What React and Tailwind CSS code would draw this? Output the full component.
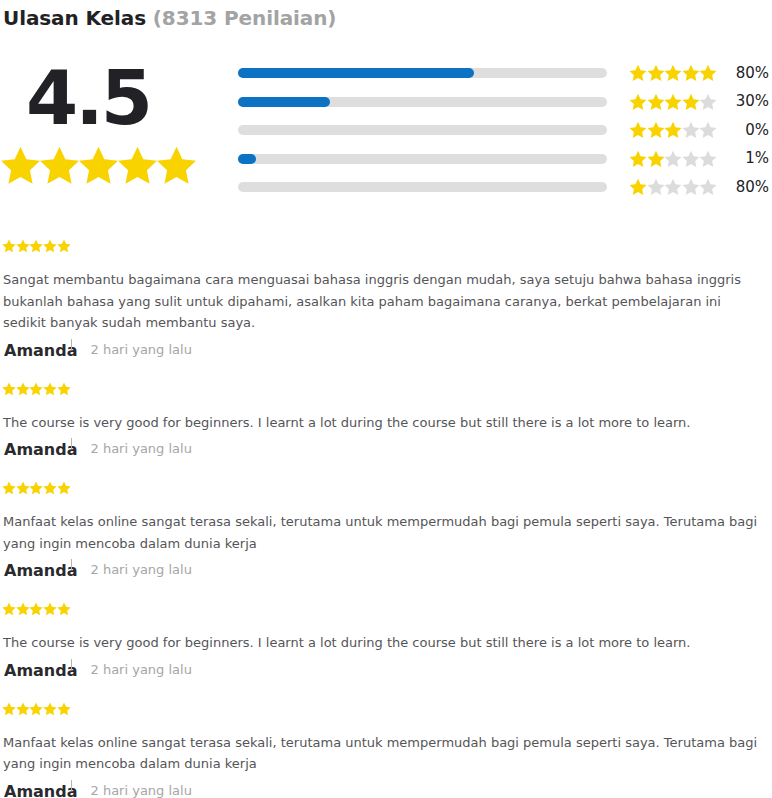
import React from "react";

const STAR_PATH =
  "M12 0.5L15.41 7.81 23.41 8.79 17.52 14.29 19.05 22.21 12 18.3 4.95 22.21 6.48 14.29 0.59 8.79 8.59 7.81z";

const BARS = [
  { stars: 5, fill: 64, label: "80%" },
  { stars: 4, fill: 25, label: "30%" },
  { stars: 3, fill: 0, label: "0%" },
  { stars: 2, fill: 5, label: "1%" },
  { stars: 1, fill: 0, label: "80%" },
];

const REVIEWS = [
  "Sangat membantu bagaimana cara menguasai bahasa inggris dengan mudah, saya setuju bahwa bahasa inggris bukanlah bahasa yang sulit untuk dipahami, asalkan kita paham bagaimana caranya, berkat pembelajaran ini sedikit banyak sudah membantu saya.",
  "The course is very good for beginners. I learnt a lot during the course but still there is a lot more to learn.",
  "Manfaat kelas online sangat terasa sekali, terutama untuk mempermudah bagi pemula seperti saya. Terutama bagi yang ingin mencoba dalam dunia kerja",
  "The course is very good for beginners. I learnt a lot during the course but still there is a lot more to learn.",
  "Manfaat kelas online sangat terasa sekali, terutama untuk mempermudah bagi pemula seperti saya. Terutama bagi yang ingin mencoba dalam dunia kerja",
];

function Stars({ count = 5, filled = 5, size, className = "" }) {
  return (
    <div className={`flex ${className}`}>
      {Array.from({ length: count }).map((_, i) => (
        <svg
          key={i}
          viewBox="0 0 24 23"
          width={size}
          height={size}
          className={i < filled ? "fill-[#f8d300]" : "fill-[#dcdcdc]"}
        >
          <path d={STAR_PATH} />
        </svg>
      ))}
    </div>
  );
}

export default function App() {
  return (
    <div className="w-[772px] bg-white font-['DejaVu_Sans',sans-serif] text-[#222226]">
      {/* Header */}
      <h2 className="pl-[3px] pt-[5px] text-[20px] font-bold leading-[26px] tracking-[-0.1px]">
        Ulasan Kelas <span className="text-[#a3a3a3]">(8313 Penilaian)</span>
      </h2>

      {/* Summary */}
      <div className="mt-[26px] flex">
        <div className="w-[196px]">
          <div className="pl-[26px] text-[75px] font-bold leading-[82px] tracking-[-3px]">
            4.5
          </div>
          <Stars size={41} className="mt-[6px] [&>svg]:-mr-[2px]" />
        </div>

        <div className="ml-[42px] flex flex-1 flex-col gap-[10.5px] pt-[7px]">
          {BARS.map((b, i) => (
            <div key={i} className="flex h-[18px] items-center">
              <div className="h-[10px] w-[369px] rounded-full bg-[#dedede]">
                <div
                  className="h-full rounded-full bg-[#0b72c4]"
                  style={{ width: `${b.fill}%` }}
                />
              </div>
              <Stars
                size={18}
                filled={b.stars}
                className="ml-[22px] [&>svg]:-mr-[0.4px]"
              />
              <div className="ml-auto pr-[3px] text-[15px] font-medium">
                {b.label}
              </div>
            </div>
          ))}
        </div>
      </div>

      {/* Reviews */}
      <div className="mt-[43px] flex flex-col gap-[21px] pl-[2px]">
        {REVIEWS.map((text, i) => (
          <div key={i}>
            <Stars size={14} className="[&>svg]:-mr-[0.3px]" />
            <p className="mt-[16px] w-[762px] pl-[1px] text-[13px] leading-[21.5px] text-[#555558]">
              {text}
            </p>
            <div className="mt-[7px] flex items-end gap-[13px]">
              <div className="relative pl-[2px] text-[16px] font-semibold leading-[20px] text-[#2a2a2e]">
                Amanda
                <span className="absolute right-[6px] top-[-2px] h-[11px] w-px bg-[#b5b5b5]" />
              </div>
              <span className="pb-[3px] text-[13px] leading-[16px] text-[#a6a6a6]">
                2 hari yang lalu
              </span>
            </div>
          </div>
        ))}
      </div>
    </div>
  );
}
